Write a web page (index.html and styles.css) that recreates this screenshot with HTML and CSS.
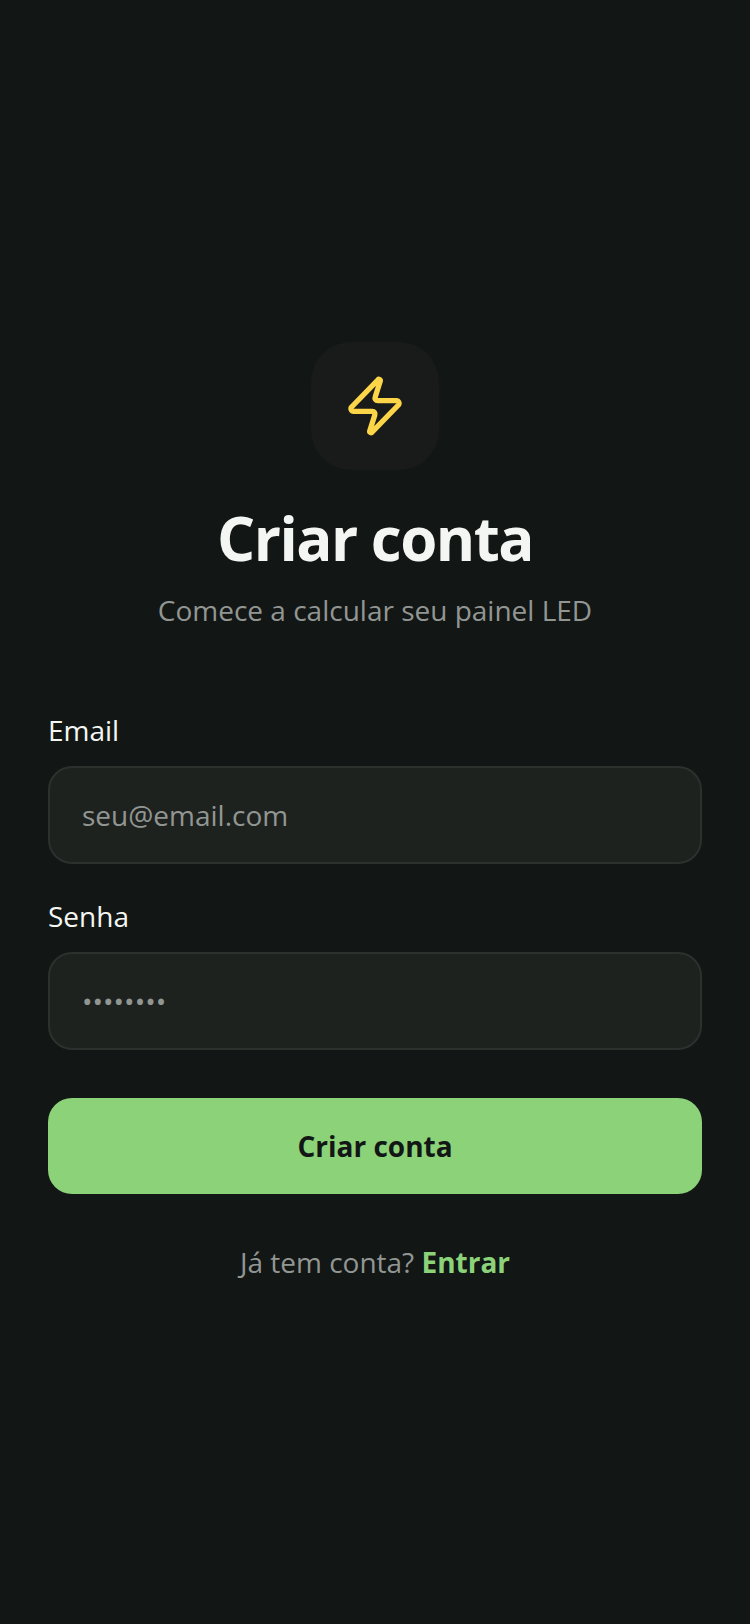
FILE: index.html
```html
<!DOCTYPE html>
<html lang="pt-BR">
<head>
    <meta charset="UTF-8">
    <meta name="viewport" content="width=device-width, initial-scale=1.0">
    <title>Criar conta</title>
    <link rel="stylesheet" href="styles.css">
</head>
<body>
    <main class="container">
        <header class="cabecalho">
            <div class="logo">
                <svg viewBox="0 0 24 24" fill="none" stroke="currentColor" stroke-width="2" stroke-linecap="round" stroke-linejoin="round" aria-hidden="true">
                    <path d="M4 14a1 1 0 0 1-.78-1.63l9.9-10.2a.5.5 0 0 1 .86.46l-1.92 6.02A1 1 0 0 0 13 10h7a1 1 0 0 1 .78 1.63l-9.9 10.2a.5.5 0 0 1-.86-.46l1.92-6.02A1 1 0 0 0 11 14z"/>
                </svg>
            </div>
            <h1>Criar conta</h1>
            <p>Comece a calcular seu painel LED</p>
        </header>
        <form class="formulario">
            <div class="campo">
                <label for="email">Email</label>
                <input type="email" id="email" placeholder="seu@email.com">
            </div>
            <div class="campo">
                <label for="senha">Senha</label>
                <input type="password" id="senha" placeholder="••••••••">
            </div>
            <button type="submit">Criar conta</button>
        </form>
        <p class="rodape">Já tem conta? <a href="#">Entrar</a></p>
    </main>
</body>
</html>
```
FILE: styles.css
```css
* {
    box-sizing: border-box;
}
body {
    margin: 0;
    min-height: 100vh;
    display: flex;
    align-items: center;
    background-color: #121615;
    color: #f4f6f3;
    font-family: "Open Sans", "Noto Sans", sans-serif;
    font-size: 28px;
    line-height: 40px;
}
.container {
    width: 100%;
    padding: 48px;
}
.cabecalho {
    display: flex;
    flex-direction: column;
    align-items: center;
    margin-bottom: 80px;
    text-align: center;
}
.logo {
    display: flex;
    align-items: center;
    justify-content: center;
    width: 128px;
    height: 128px;
    margin-bottom: 32px;
    border-radius: 40px;
    background-color: #191b1a;
    color: #fcd549;
}
.logo svg {
    width: 64px;
    height: 64px;
}
h1 {
    margin: 0;
    font-size: 60px;
    line-height: 72px;
    font-weight: 700;
    letter-spacing: -0.025em;
}
.cabecalho p {
    margin: 16px 0 0;
    color: #929693;
}
.formulario {
    display: flex;
    flex-direction: column;
}
.campo {
    margin-bottom: 32px;
}
.campo label {
    display: block;
    margin-bottom: 16px;
}
.campo input {
    display: block;
    width: 100%;
    height: 98px;
    padding: 0 32px;
    border: 2px solid #2d312e;
    border-radius: 24px;
    background-color: #1e221f;
    color: #f4f6f3;
    font: inherit;
}
.campo input::placeholder {
    color: #929693;
    opacity: 1;
}
.formulario button {
    height: 96px;
    margin-top: 16px;
    border: none;
    border-radius: 24px;
    background-color: #8bd279;
    color: #121615;
    font: inherit;
    font-weight: 700;
    cursor: pointer;
}
.rodape {
    margin: 48px 0 0;
    color: #929693;
    text-align: center;
}
.rodape a {
    color: #8bd279;
    font-weight: 700;
    text-decoration: none;
}
```
